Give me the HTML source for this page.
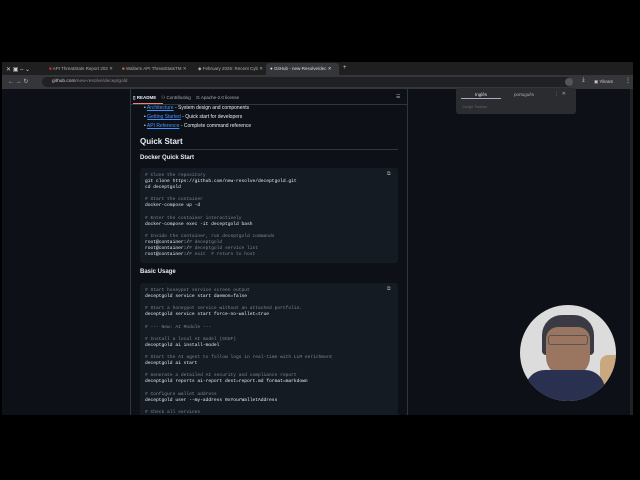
<!DOCTYPE html><html><head><style>
*{margin:0;padding:0;box-sizing:border-box}
body{width:640px;height:480px;background:#000;position:relative;overflow:hidden;font-family:"Liberation Sans",sans-serif}
.a{position:absolute;white-space:nowrap}
.t{overflow:hidden}
.code{font-family:"Liberation Mono",monospace;font-size:4.6px;white-space:pre;line-height:6.1px;color:#e6edf3}
.c{color:#7d8590}
</style></head><body>
<div class="a" style="left:2px;top:62px;width:631px;height:13px;background:#1f1f1f"></div>
<div class="a" style="left:6px;top:66px;font-size:6px;color:#ccc">✕ ▣ ‒ ⌄</div>
<div class="a t" style="left:45px;top:63px;width:70px;height:11px;color:#aaa;font-size:4.5px;padding:3px 4px"><span style="color:#c33">■</span> API ThreatStats Report 202 ✕</div>
<div class="a t" style="left:118px;top:63px;width:72px;height:11px;color:#aaa;font-size:4.5px;padding:3px 4px"><span style="color:#c63">■</span> Wallarm API ThreatStatsTM ✕</div>
<div class="a t" style="left:194px;top:63px;width:72px;height:11px;color:#aaa;font-size:4.5px;padding:3px 4px">◆ February 2026: Recent Cyb ✕</div>
<div class="a t" style="left:266px;top:63px;width:73px;height:12px;background:#35363a;border-radius:3px 3px 0 0;color:#ddd;font-size:4.5px;padding:3px 4px">● GitHub - new-Resolve/dec ✕</div>
<div class="a" style="left:343px;top:65px;color:#ccc;font-size:6px">+</div>
<div class="a" style="left:2px;top:75px;width:631px;height:14px;background:#35363a"></div>
<div class="a" style="left:8px;top:78px;color:#bbb;font-size:6px">← → ↻</div>
<div class="a" style="left:42px;top:77px;width:530px;height:10px;background:#202124;border-radius:5px;color:#ccc;font-size:4.8px;padding:2px 10px">github.com<span style="color:#888">/new-resolve/deceptgold</span></div>
<div class="a" style="left:565px;top:78px;width:8px;height:8px;background:#555;border-radius:4px"></div>
<div class="a" style="left:582px;top:77px;color:#ccc;font-size:6px">⤓</div>
<div class="a" style="left:592px;top:77px;width:28px;height:9px;color:#ccc;font-size:4.5px;padding:2px">▣ Yikram</div>
<div class="a" style="left:625px;top:77px;color:#ccc;font-size:6px">⋮</div>
<div class="a" style="left:2px;top:89px;width:631px;height:326px;background:#0d1117"></div>
<div class="a" style="left:630px;top:89px;width:3px;height:326px;background:#222"></div>
<div class="a" style="left:130px;top:89px;width:278px;height:326px;border-left:1px solid #30363d;border-right:1px solid #30363d"></div>
<div class="a" style="left:131px;top:104px;width:277px;height:1px;background:#30363d"></div>
<div class="a" style="left:133px;top:95px;font-size:4.5px;color:#e6edf3"><b>▯ README</b> &nbsp;&nbsp; <span style="color:#aaa">⚇ Contributing &nbsp;&nbsp; ⚖ Apache-2.0 license</span></div>
<div class="a" style="left:133px;top:103px;width:30px;height:1px;background:#f78166"></div>
<div class="a" style="left:396px;top:94px;color:#aaa;font-size:5px">☰</div>
<div class="a" style="left:144px;top:104px;font-size:5px;line-height:9px;color:#e6edf3">• <u style="color:#4493f8">Architecture</u> - System design and components<br>• <u style="color:#4493f8">Getting Started</u> - Quick start for developers<br>• <u style="color:#4493f8">API Reference</u> - Complete command reference</div>
<div class="a" style="left:140px;top:137px;font-size:8px;font-weight:bold;color:#e6edf3">Quick Start</div>
<div class="a" style="left:140px;top:149px;width:258px;height:1px;background:#30363d"></div>
<div class="a" style="left:140px;top:155px;font-size:6px;font-weight:bold;color:#e6edf3">Docker Quick Start</div>
<div class="a" style="left:140px;top:168px;width:258px;height:95px;background:#151b23;border-radius:3px"></div>
<div class="a" style="left:387px;top:171px;color:#999;font-size:5px">⧉</div>
<div class="a code" style="left:145px;top:173px"><span class="c"># Clone the repository</span>
git clone https://github.com/new-resolve/deceptgold.git
cd deceptgold

<span class="c"># Start the container</span>
docker-compose up -d

<span class="c"># Enter the container interactively</span>
docker-compose exec -it deceptgold bash

<span class="c"># Inside the container, run deceptgold commands</span>
root@container:/<span class="c"># deceptgold</span>
root@container:/<span class="c"># deceptgold service list</span>
root@container:/<span class="c"># exit  # return to host</span></div>
<div class="a" style="left:140px;top:269px;font-size:6px;font-weight:bold;color:#e6edf3">Basic Usage</div>
<div class="a" style="left:140px;top:283px;width:258px;height:132px;background:#151b23;border-radius:3px 3px 0 0"></div>
<div class="a" style="left:387px;top:286px;color:#999;font-size:5px">⧉</div>
<div class="a code" style="left:145px;top:288px"><span class="c"># Start honeypot service screen output</span>
deceptgold service start daemon=false

<span class="c"># Start a honeypot service without an attached portfolio.</span>
deceptgold service start force-no-wallet=true

<span class="c"># --- New: AI Module ---</span>

<span class="c"># Install a local AI model (GGUF)</span>
deceptgold ai install-model

<span class="c"># Start the AI agent to follow logs in real-time with LLM enrichment</span>
deceptgold ai start

<span class="c"># Generate a detailed AI security and compliance report</span>
deceptgold reports ai-report dest=report.md format=markdown

<span class="c"># Configure wallet address</span>
deceptgold user --my-address 0xYourWalletAddress

<span class="c"># Check all services</span></div>
<div class="a" style="left:456px;top:88px;width:120px;height:26px;background:#2b2c2f;border-radius:3px"></div>
<div class="a" style="left:475px;top:92px;font-size:4.5px;color:#ddd">Inglês</div>
<div class="a" style="left:461px;top:98px;width:40px;height:1px;background:#aac"></div>
<div class="a" style="left:514px;top:92px;font-size:4.5px;color:#aaa">português</div>
<div class="a" style="left:554px;top:91px;font-size:5px;color:#aaa">⋮ &nbsp;✕</div>
<div class="a" style="left:462px;top:105px;font-size:3.5px;color:#666">Google Tradutor</div>
<div class="a" style="left:520px;top:305px;width:96px;height:96px;border-radius:50%;background:#dcdcdc;overflow:hidden">
<div class="a" style="left:22px;top:10px;width:52px;height:40px;background:#3a3a44;border-radius:20px 20px 4px 4px"></div>
<div class="a" style="left:26px;top:22px;width:44px;height:50px;background:#9a7560;border-radius:12px 12px 20px 20px"></div>
<div class="a" style="left:28px;top:30px;width:40px;height:10px;border:1px solid #555;border-radius:3px"></div>
<div class="a" style="left:80px;top:50px;width:30px;height:50px;background:#c9a880;border-radius:8px"></div>
<div class="a" style="left:5px;top:65px;width:80px;height:40px;background:#2a3050;border-radius:20px 20px 0 0"></div>
</div>
</body></html>
